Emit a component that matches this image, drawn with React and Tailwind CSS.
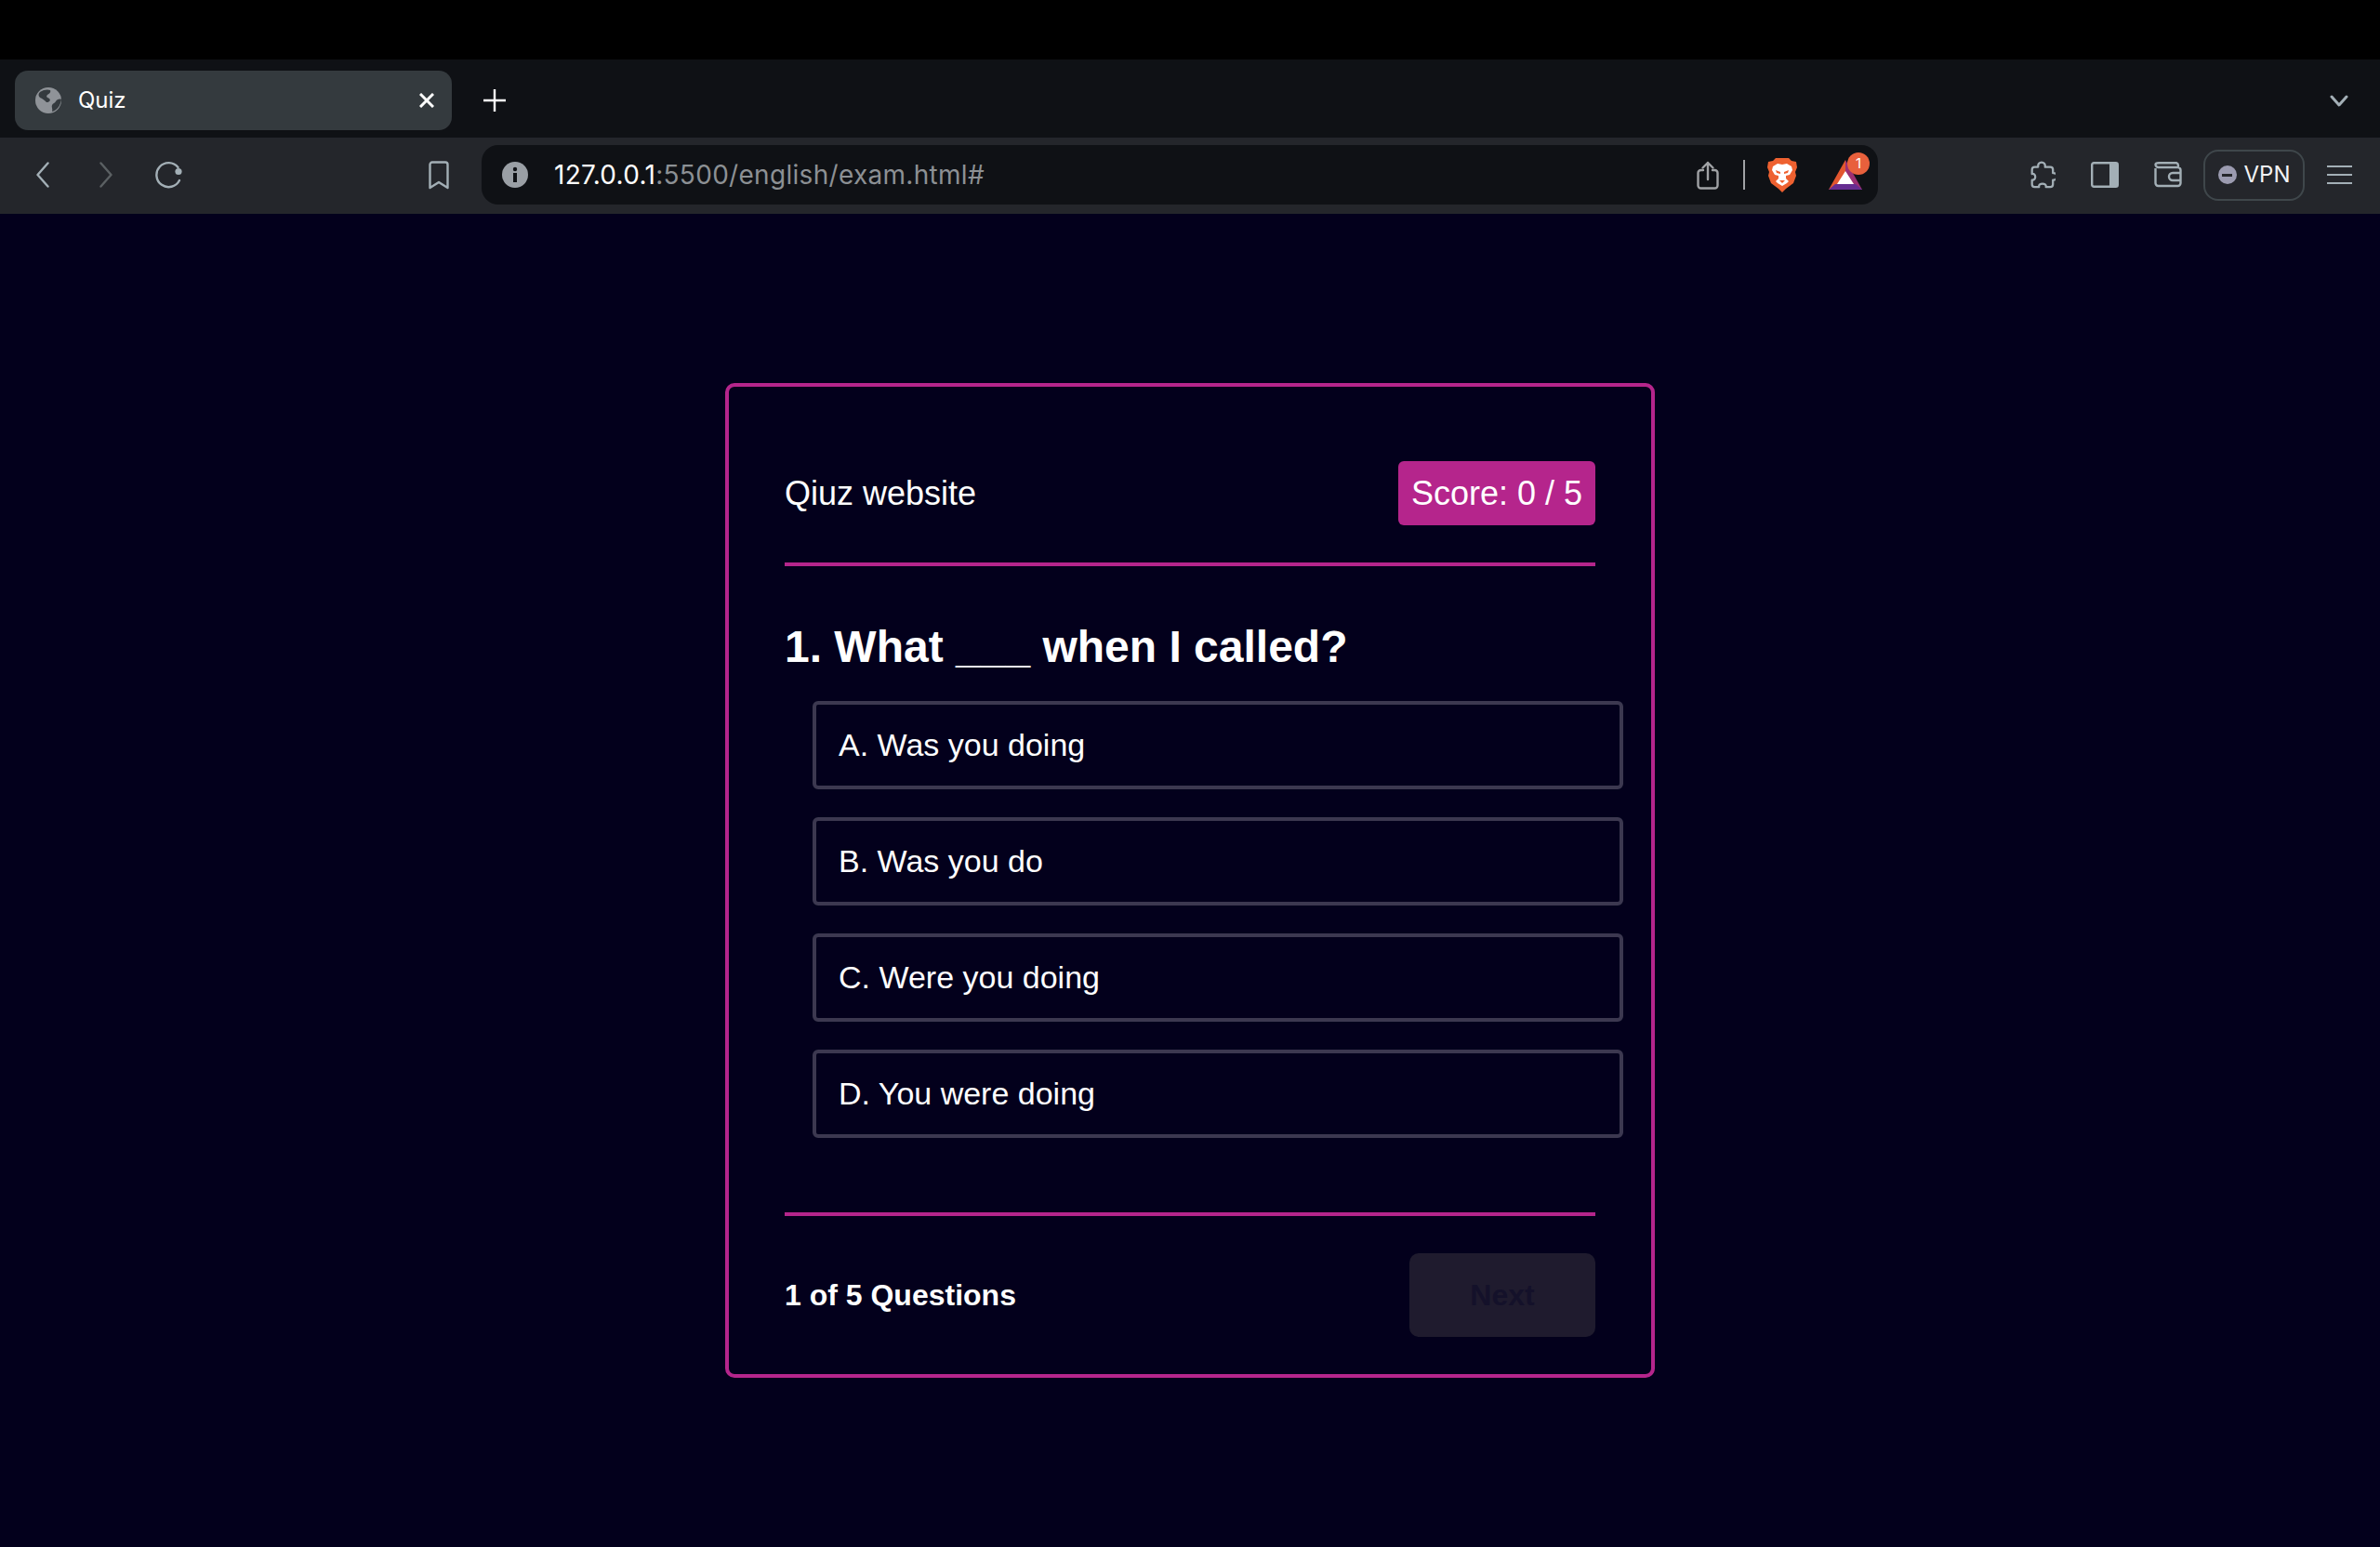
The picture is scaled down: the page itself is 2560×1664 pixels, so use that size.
import React from 'react';

const options = ['A. Was you doing', 'B. Was you do', 'C. Were you doing', 'D. You were doing'];

const stroke = '#a3afb6';

const Slot = ({ className = '', children }) => (
  <div className={`flex h-full items-center justify-center ${className}`}>{children}</div>
);

const Globe = () => (
  <svg width="28" height="28" viewBox="0 0 28 28">
    <circle cx="14" cy="14" r="14" fill="#8f9398" />
    <path d="M5 5c4-3 9-3 11-2 1 2-1 4-3 5-2 2 0 3 2 4 2 2 0 4-3 4-2-2-4-4-7-5-2-2-2-4 0-6z" fill="#343a3e" />
    <path d="M28 13c-2-1-5 0-6 2-1 2-3 2-4 4-1 2 1 4 0 7 5-1 9-6 10-13z" fill="#343a3e" />
  </svg>
);

const Back = ({ color, flip }) => (
  <svg width="14" height="28" viewBox="0 0 14 28" className={flip ? 'scale-x-[-1]' : ''}>
    <path d="M12.500 1.500 1.500 14l11 12.500" fill="none" stroke={color} strokeWidth="2.400" strokeLinecap="round" strokeLinejoin="round" />
  </svg>
);

const Reload = () => (
  <svg width="30" height="30" viewBox="0 0 30 30">
    <path d="M26 21a13 13 0 1 1-1.500-14" fill="none" stroke={stroke} strokeWidth="2.400" strokeLinecap="round" />
    <circle cx="25" cy="11.500" r="3.600" fill={stroke} />
  </svg>
);

const Bookmark = () => (
  <svg width="22" height="31" viewBox="0 0 22 31">
    <path d="M1.500 4a2.500 2.500 0 0 1 2.500-2.500h14A2.500 2.500 0 0 1 20.500 4v25l-9.500-6-9.500 6z" fill="none" stroke={stroke} strokeWidth="2.400" strokeLinejoin="round" />
  </svg>
);

const Info = () => (
  <svg width="28" height="28" viewBox="0 0 28 28">
    <circle cx="14" cy="14" r="14" fill="#9a9fa5" />
    <circle cx="14" cy="8" r="2.200" fill="#0f1115" />
    <rect x="12" y="12" width="4" height="10" fill="#0f1115" />
  </svg>
);

const Share = () => (
  <svg width="24" height="31" viewBox="0 0 24 31" fill="none" stroke="#a0a2a5" strokeWidth="2.400" strokeLinecap="round" strokeLinejoin="round">
    <path d="M7 10H4.500a3 3 0 0 0-3 3v13.500a3 3 0 0 0 3 3h15a3 3 0 0 0 3-3V13a3 3 0 0 0-3-3H17" />
    <path d="M12 20V2M6.500 7.500 12 2l5.500 5.500" />
  </svg>
);

const Brave = () => (
  <svg width="32" height="37" viewBox="0 0 32 37">
    <path d="M9 0h14l3 3 5 1 1 6-2 5 1 4-3 8-8 6-4 4-4-4-8-6-3-8 1-4-2-5 1-6 5-1z" fill="#ee6130" />
    <path d="M6 9l5-3 5 1 5-1 5 3 1 4-3 5-4 1v3l3 3-2 2-5 3-5-3-2-2 3-3v-3l-4-1-3-5z" fill="#fff" />
    <path d="M9 13l5 2v2l-4-1zM23 13l-5 2v2l4-1zM13 24h6l-3 3z" fill="#ee6130" />
  </svg>
);

const Bat = () => (
  <svg width="36" height="32" viewBox="0 0 36 32">
    <path d="M18 0 0 32h18z" fill="#e2562f" />
    <path d="M18 0l18 32H18z" fill="#9c2f73" />
    <path d="M0 32l7-6h22l7 6z" fill="#662d91" />
    <path d="M18 12l9 14H9z" fill="#fff" />
  </svg>
);

const Puzzle = () => (
  <svg width="30" height="30" viewBox="0 0 32 32">
    <path d="M12 7c-1-7 9-7 8 0h6c2 0 3 1 3 3v4c6-1 6 9 0 8v5c0 2-1 3-3 3h-5c1-5-9-5-8 0H8c-2 0-3-1-3-3v-5c5 1 5-8 0-7V10c0-2 1-3 3-3z" fill="none" stroke={stroke} strokeWidth="2.400" strokeLinejoin="round" />
  </svg>
);

const Sidebar = () => (
  <svg width="30" height="28" viewBox="0 0 30 28">
    <rect x="1.200" y="1.200" width="27.600" height="25.600" rx="2" fill="none" stroke={stroke} strokeWidth="2.400" />
    <rect x="20" y="1" width="9" height="26" rx="1" fill={stroke} />
  </svg>
);

const Wallet = () => (
  <svg width="30" height="28" viewBox="0 0 30 28" fill="none" stroke={stroke} strokeWidth="2.400" strokeLinejoin="round">
    <path d="M1.500 7V23a3 3 0 0 0 3 3h21a3 3 0 0 0 3-3V9a3 3 0 0 0-3-3H5a3.200 3.200 0 0 1-3.500-3C1.500 2 3 1.200 5 1.200h19A3 3 0 0 1 26 4v2" />
    <path d="M28.500 12H20a3.500 3.500 0 0 0 0 8h8.500" />
  </svg>
);

const Menu = () => (
  <svg width="27" height="22" viewBox="0 0 27 22" stroke={stroke} strokeWidth="2.200">
    <path d="M0 2h27M0 11h27M0 20h27" />
  </svg>
);

const Chrome = () => (
  <div className="font-['Inter',sans-serif]">
    <div className="h-16 bg-black" />

    <div className="flex h-[84px] items-center bg-[#0f1115] pl-4 pr-[34px] pt-1">
      <div className="flex h-16 w-[470px] items-center rounded-[14px] bg-[#343a3e] pl-[22px] pr-[19px]">
        <Globe />
        <span className="ml-[18px] text-[24px] text-white">Quiz</span>
        <svg width="16" height="16" viewBox="0 0 16 16" className="ml-auto" stroke="#fff" strokeWidth="3">
          <path d="M1 1l14 14M15 1 1 15" />
        </svg>
      </div>
      <svg width="24" height="24" viewBox="0 0 24 24" className="ml-[34px]" stroke="#fff" strokeWidth="2.400">
        <path d="M12 0v24M0 12h24" />
      </svg>
      <svg width="20" height="13" viewBox="0 0 20 13" className="ml-auto" fill="none" stroke={stroke} strokeWidth="3" strokeLinecap="round" strokeLinejoin="round">
        <path d="M2 2l8 9 8-9" />
      </svg>
    </div>

    <div className="flex h-[82px] items-center bg-[#24262b] pb-[2px] pl-[12px]">
      <Slot className="w-[68px]"><Back color={stroke} /></Slot>
      <Slot className="w-[68px]"><Back color="#5b6063" flip /></Slot>
      <Slot className="w-[68px]"><Reload /></Slot>
      <Slot className="ml-[222px] w-[68px]"><Bookmark /></Slot>

      <div className="ml-[12px] flex h-16 w-[1502px] items-center rounded-[18px] bg-[#0f1115] pl-[22px] pr-[17px]">
        <Info />
        <span className="ml-[28px] text-[28px] tracking-[0.3px] text-white">
          127.0.0.1<span className="text-[#8c9094]">:5500/english/exam.html#</span>
        </span>
        <div className="ml-auto flex items-center">
          <Share />
          <div className="ml-[26px] h-8 w-0.5 bg-[#a0a2a5]" />
          <div className="ml-[24px]"><Brave /></div>
          <div className="relative ml-[34px]">
            <Bat />
            <span className="absolute right-[-8px] top-[-8px] flex h-6 w-6 items-center justify-center rounded-full bg-[#e8603c] text-[15px] text-white">1</span>
          </div>
        </div>
      </div>

      <Slot className="ml-[142px] w-[68px]"><Puzzle /></Slot>
      <Slot className="w-[68px]"><Sidebar /></Slot>
      <Slot className="w-[68px]"><Wallet /></Slot>
      <div className="ml-[4px] flex h-[55px] w-[109px] items-center justify-center gap-2 rounded-[16px] border-2 border-[#3f474b]">
        <span className="flex h-5 w-5 items-center justify-center rounded-full bg-[#9b9bb0]">
          <span className="h-[3px] w-[11px] bg-[#24262b]" />
        </span>
        <span className="text-[24px] text-[#f1f3f5]">VPN</span>
      </div>
      <Slot className="ml-[23px] w-[28px]"><Menu /></Slot>
    </div>
  </div>
);

const App = () => {
  return (
    <div className="flex min-h-screen flex-col bg-[#03001c] font-['Liberation_Sans',sans-serif] text-white">
      <Chrome />

      <main className="flex justify-center pt-[182px]">
        <div className="h-[1070px] w-[1000px] rounded-[10px] border-4 border-[#b5258c] px-[60px] pt-[80px]">
          <div className="flex items-center justify-between border-b-4 border-[#b5258c] pb-[40px]">
            <span className="text-[36px]">Qiuz website</span>
            <div className="flex h-[69px] w-[212px] items-center justify-center rounded-[6px] bg-[#b5258c] text-[36px]">
              Score: 0 / 5
            </div>
          </div>

          <h2 className="mt-[58px] text-[48px] font-bold leading-[58px]">1. What ___ when I called?</h2>

          <div className="ml-[30px] mt-[29px] flex w-full flex-col gap-[30px]">
            {options.map((option) => (
              <div key={option} className="flex h-[95px] items-center rounded-[6px] border-4 border-[#3c3850] pl-6 text-[34px]">
                {option}
              </div>
            ))}
          </div>

          <div className="mt-[80px] flex items-center justify-between border-t-4 border-[#b5258c] pt-[40px]">
            <span className="text-[32px] font-bold">1 of 5 Questions</span>
            <button className="h-[90px] w-[200px] rounded-[10px] bg-[#1f1b2e] text-[32px] font-bold text-[#14112a]">Next</button>
          </div>
        </div>
      </main>
    </div>
  );
};

export default App;
